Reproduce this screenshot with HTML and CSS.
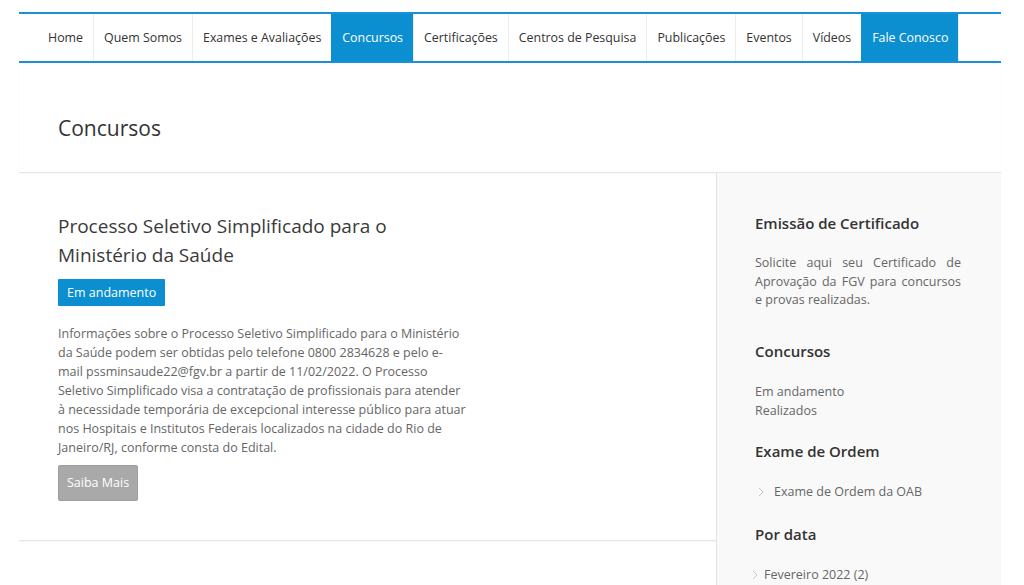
FILE: index.html
```html
<!DOCTYPE html>
<html lang="pt-BR">
<head>
<meta charset="utf-8">
<title>Concursos</title>
<link rel="stylesheet" href="styles.css">
</head>
<body>
<div class="page">
  <nav class="nav">
    <ul class="nav-list">
      <li class="nav-item first"><a href="#">Home</a></li>
      <li class="nav-item"><a href="#">Quem Somos</a></li>
      <li class="nav-item"><a href="#">Exames e Avaliações</a></li>
      <li class="nav-item active"><a href="#">Concursos</a></li>
      <li class="nav-item"><a href="#">Certificações</a></li>
      <li class="nav-item"><a href="#">Centros de Pesquisa</a></li>
      <li class="nav-item"><a href="#">Publicações</a></li>
      <li class="nav-item"><a href="#">Eventos</a></li>
      <li class="nav-item"><a href="#">Vídeos</a></li>
      <li class="nav-item active"><a href="#">Fale Conosco</a></li>
      <li class="nav-item spacer"></li>
    </ul>
  </nav>

  <header class="page-header">
    <h1 class="page-title">Concursos</h1>
  </header>

  <div class="content">
    <main class="main">
      <article class="article">
        <h2 class="article-title">Processo Seletivo Simplificado para o Ministério da Saúde</h2>
        <span class="badge">Em andamento</span>
        <p class="article-text">Informações sobre o Processo Seletivo Simplificado para o Ministério da Saúde podem ser obtidas pelo telefone 0800 2834628 e pelo e-mail pssminsaude22@fgv.br a partir de 11/02/2022. O Processo Seletivo Simplificado visa a contratação de profissionais para atender à necessidade temporária de excepcional interesse público para atuar nos Hospitais e Institutos Federais localizados na cidade do Rio de Janeiro/RJ, conforme consta do Edital.</p>
        <a class="btn-more" href="#">Saiba Mais</a>
      </article>
    </main>

    <aside class="sidebar">
      <section class="widget">
        <h3 class="widget-title">Emissão de Certificado</h3>
        <p class="widget-text">Solicite aqui seu Certificado de Aprovação da FGV para concursos e provas realizadas.</p>
      </section>
      <section class="widget">
        <h3 class="widget-title">Concursos</h3>
        <ul class="plain-list">
          <li><a href="#">Em andamento</a></li>
          <li><a href="#">Realizados</a></li>
        </ul>
      </section>
      <section class="widget">
        <h3 class="widget-title">Exame de Ordem</h3>
        <ul class="chevron-list indented">
          <li><svg class="chev" viewBox="0 0 6 10" width="6" height="10"><path d="M1 1 L5 5 L1 9" fill="none" stroke="#c8c8c8" stroke-width="1"/></svg><a href="#">Exame de Ordem da OAB</a></li>
        </ul>
      </section>
      <section class="widget">
        <h3 class="widget-title">Por data</h3>
        <ul class="chevron-list">
          <li><svg class="chev" viewBox="0 0 6 10" width="6" height="10"><path d="M1 1 L5 5 L1 9" fill="none" stroke="#c8c8c8" stroke-width="1"/></svg><a href="#">Fevereiro 2022 (2)</a></li>
        </ul>
      </section>
    </aside>
  </div>
</div>
</body>
</html>
```

FILE: styles.css
```css
* { box-sizing: border-box; }

html, body {
  margin: 0;
  padding: 0;
  background: #ffffff;
}

body {
  font-family: "Open Sans", "Liberation Sans", sans-serif;
  color: #333333;
  overflow: hidden;
}

a { text-decoration: none; color: inherit; }

.page {
  width: 982px;
  margin: 0 0 0 19px;
  padding-top: 12px;
}

/* NAV */
.nav {
  border-top: 2px solid #1b90d6;
  border-bottom: 2px solid #1b90d6;
}

.nav-list {
  list-style: none;
  margin: 0;
  padding: 0 0 0 19px;
  display: flex;
  height: 47px;
}

.nav-item {
  display: flex;
  flex: none;
  border-left: 1px solid #ececec;
}

.nav-item.first { border-left: none; }

.nav-item a {
  display: flex;
  align-items: center;
  padding: 0 10px;
  font-size: 12.4px;
  color: #333333;
  height: 47px;
  white-space: nowrap;
}

.nav-item.active { background: #0b8fd1; border-left-color: #0b8fd1; }
.nav-item.active a { color: #ffffff; }

.nav-item.spacer {
  width: 43px;
}

/* PAGE HEADER */
.page-header {
  padding: 50px 0 29px 39px;
  border-bottom: 1px solid #e6e6e6;
  box-shadow: 0 1px 2px rgba(0, 0, 0, 0.04);
}

.page-title {
  margin: 0;
  font-size: 21px;
  line-height: 30px;
  font-weight: 400;
  color: #333333;
}

/* CONTENT */
.content {
  display: flex;
  align-items: stretch;
  min-height: 420px;
}

.main {
  width: 697px;
  flex: none;
}

.article {
  padding: 39px 0 39px 39px;
  border-bottom: 1px solid #e6e6e6;
  box-shadow: 0 1px 1px rgba(0, 0, 0, 0.03);
}

.article-title {
  margin: 0;
  width: 360px;
  font-size: 19px;
  line-height: 29px;
  font-weight: 400;
  color: #3a3a3a;
}

.badge {
  display: inline-block;
  margin-top: 9px;
  background: #0b8fd1;
  color: #ffffff;
  font-size: 12.5px;
  line-height: 27px;
  padding: 0 9px;
  border-radius: 1px;
}

.article-text {
  margin: 18px 0 0;
  width: 408px;
  font-size: 12.5px;
  line-height: 19px;
  color: #666666;
}

.btn-more {
  display: inline-block;
  margin-top: 8px;
  background: #a9a9a9;
  border: 1px solid #9e9e9e;
  color: #ffffff;
  font-size: 12.5px;
  line-height: 34px;
  padding: 0 8px;
  border-radius: 2px;
}

/* SIDEBAR */
.sidebar {
  width: 285px;
  flex: none;
  background: #f9f9f9;
  border-left: 1px solid #e4e4e4;
  padding: 39px 40px 0 38px;
}

.widget { margin-bottom: 20px; }

.widget-title {
  margin: 0 0 20px;
  font-size: 15px;
  line-height: 22px;
  font-weight: 600;
  color: #333333;
}

.widget-text {
  margin: 0 0 30px;
  font-size: 12.5px;
  line-height: 18.5px;
  color: #666666;
  text-align: justify;
}

.plain-list, .chevron-list {
  list-style: none;
  margin: 0;
  padding: 0;
  font-size: 12.5px;
  line-height: 19px;
  color: #666666;
}

.chevron-list li {
  display: flex;
  align-items: center;
  gap: 6px;
  margin-left: -3px;
}

.chevron-list.indented li {
  margin-left: 3px;
  gap: 10px;
  padding-bottom: 2px;
}

.chev { flex: none; margin-top: 2px; }
```
